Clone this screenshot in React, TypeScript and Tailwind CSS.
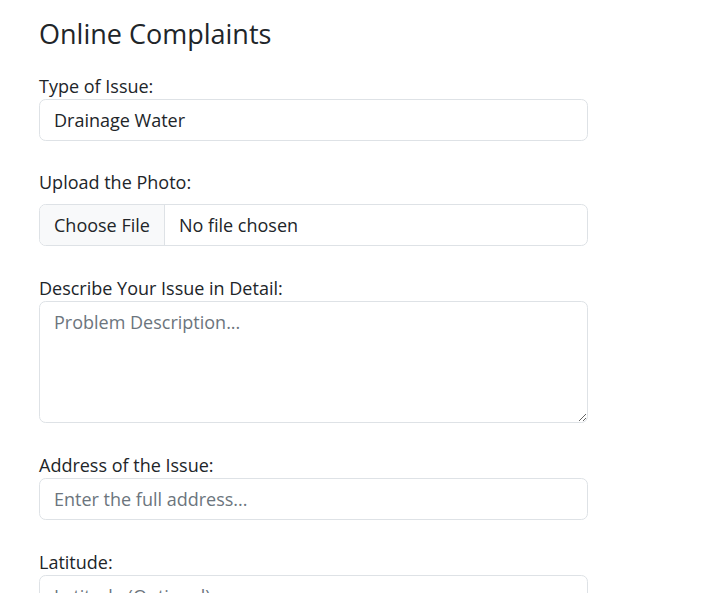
import React, { useState } from 'react';

const Field: React.FC<{ label: string; children: React.ReactNode; gap?: string }> = ({ label, children, gap }) => {
  return (
    <div className={gap ?? 'mt-[29px]'}>
      <label className="block text-[18px] leading-[26px] text-[#212529]">{label}</label>
      {children}
    </div>
  );
};

const inputCls =
  'block w-full h-[42px] rounded-[6.6px] border border-[#dee2e6] bg-white px-[14px] text-[18px] text-[#212529] placeholder:text-[#6c757d] outline-none';

const App: React.FC = () => {
  const [issue, setIssue] = useState<string>('Drainage Water');
  const [desc, setDesc] = useState<string>('');
  const [address, setAddress] = useState<string>('');
  const [lat, setLat] = useState<string>('');

  return (
    <div className="min-h-screen bg-white font-['Open_Sans',sans-serif]">
      <div className="ml-[39px] w-[549px] pt-[14px]">
        <h3 className="text-[27px] leading-[40px] text-[#212529] mb-[19px]">Online Complaints</h3>
        <form onSubmit={(e: React.FormEvent<HTMLFormElement>) => e.preventDefault()}>
          <Field label="Type of Issue:" gap="">
            <input className={inputCls} type="text" value={issue} onChange={(e: React.ChangeEvent<HTMLInputElement>) => setIssue(e.target.value)} />
          </Field>
          <Field label="Upload the Photo:" gap="mt-[28px]">
            <div className="mt-[9px] flex h-[42px] w-full overflow-hidden rounded-[6.6px] border border-[#dee2e6] text-[18px] text-[#212529]">
              <span className="flex items-center border-r border-[#dee2e6] bg-[#f8f9fa] px-[14px]">Choose File</span>
              <span className="flex items-center px-[14px]">No file chosen</span>
            </div>
          </Field>
          <Field label="Describe Your Issue in Detail:">
            <textarea
              className="block w-full h-[122px] rounded-[6.6px] border border-[#dee2e6] bg-white px-[14px] py-[7px] text-[18px] leading-[27px] text-[#212529] placeholder:text-[#6c757d] outline-none"
              placeholder="Problem Description..."
              value={desc}
              onChange={(e: React.ChangeEvent<HTMLTextAreaElement>) => setDesc(e.target.value)}
            />
          </Field>
          <Field label="Address of the Issue:">
            <input className={inputCls} type="text" placeholder="Enter the full address..." value={address} onChange={(e: React.ChangeEvent<HTMLInputElement>) => setAddress(e.target.value)} />
          </Field>
          <Field label="Latitude:">
            <input className={inputCls} type="text" placeholder="Latitude (Optional)" value={lat} onChange={(e: React.ChangeEvent<HTMLInputElement>) => setLat(e.target.value)} />
          </Field>
        </form>
      </div>
    </div>
  );
};

export default App;
